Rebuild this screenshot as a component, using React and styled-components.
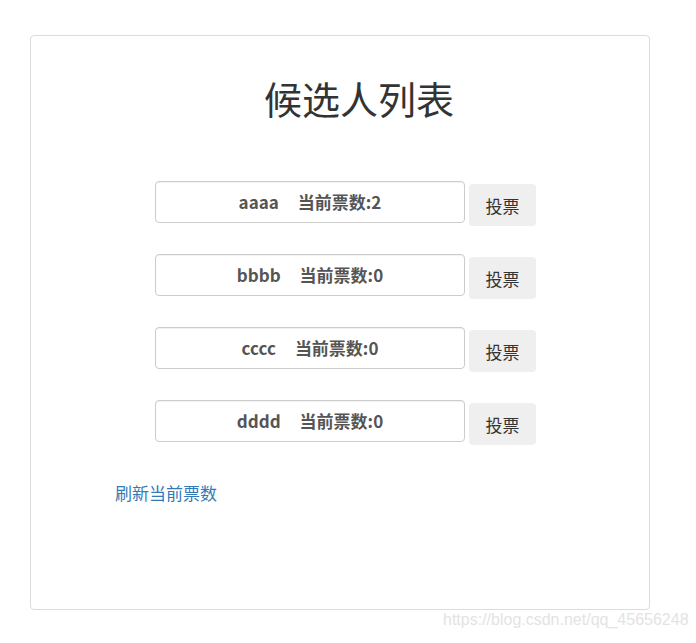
import React from "react";
import styled, { createGlobalStyle } from "styled-components";

const GlobalStyle = createGlobalStyle`
  html, body {
    margin: 0;
    padding: 0;
    background: #fff;
    font-family: "Liberation Sans", "Noto Sans CJK SC", sans-serif;
  }
`;

const Page = styled.div`
  width: 696px;
  height: 643px;
  padding: 35px 0 0 30px;
  box-sizing: border-box;
`;

const Card = styled.div`
  width: 620px;
  height: 575px;
  border: 1px solid #dcdcdc;
  border-radius: 4px;
  box-sizing: border-box;
  padding-top: 36px;
`;

const Title = styled.h1`
  margin: 0;
  text-align: center;
  font-family: "Noto Sans CJK SC", sans-serif;
  font-weight: 400;
  font-size: 38px;
  line-height: 52px;
  color: #333;
  padding-left: 38px;
`;

const List = styled.div`
  display: flex;
  flex-direction: column;
  gap: 28px;
  margin-top: 57px;
  padding-left: 124px;
`;

const Row = styled.div`
  display: flex;
  align-items: flex-start;
  gap: 4px;
`;

const Field = styled.div`
  width: 310px;
  height: 42px;
  box-sizing: border-box;
  border: 1px solid #ccc;
  border-radius: 4px;
  display: flex;
  align-items: center;
  justify-content: center;
  gap: 19px;
  padding-bottom: 1px;
  font-family: "Noto Sans CJK SC", sans-serif;
  font-size: 17px;
  font-weight: 700;
  color: #555;
  box-shadow: inset 0 1px 1px rgba(0, 0, 0, 0.06);
`;

const VoteButton = styled.button`
  margin-top: 3px;
  width: 67px;
  height: 42px;
  border: none;
  border-radius: 4px;
  background: #efefef;
  color: #333;
  font-family: "Noto Sans CJK SC", sans-serif;
  font-size: 17px;
  cursor: pointer;
`;

const Refresh = styled.a`
  display: inline-block;
  margin: 35px 0 0 84px;
  font-family: "Noto Sans CJK SC", sans-serif;
  font-size: 17px;
  color: #337ab7;
  text-decoration: none;
`;

const Watermark = styled.div`
  position: absolute;
  left: 443px;
  top: 611px;
  font-size: 16px;
  color: #e3e3e3;
  font-family: "Liberation Sans", sans-serif;
`;

const candidates = [
  { name: "aaaa", votes: 2 },
  { name: "bbbb", votes: 0 },
  { name: "cccc", votes: 0 },
  { name: "dddd", votes: 0 },
];

const App = () => (
  <>
    <GlobalStyle />
    <Page>
      <Card>
        <Title>候选人列表</Title>
        <List>
          {candidates.map((c) => (
            <Row key={c.name}>
              <Field>
                <span>{c.name}</span>
                <span>当前票数:{c.votes}</span>
              </Field>
              <VoteButton>投票</VoteButton>
            </Row>
          ))}
        </List>
        <Refresh href="#">刷新当前票数</Refresh>
      </Card>
    </Page>
    <Watermark>https://blog.csdn.net/qq_45656248</Watermark>
  </>
);

export default App;
